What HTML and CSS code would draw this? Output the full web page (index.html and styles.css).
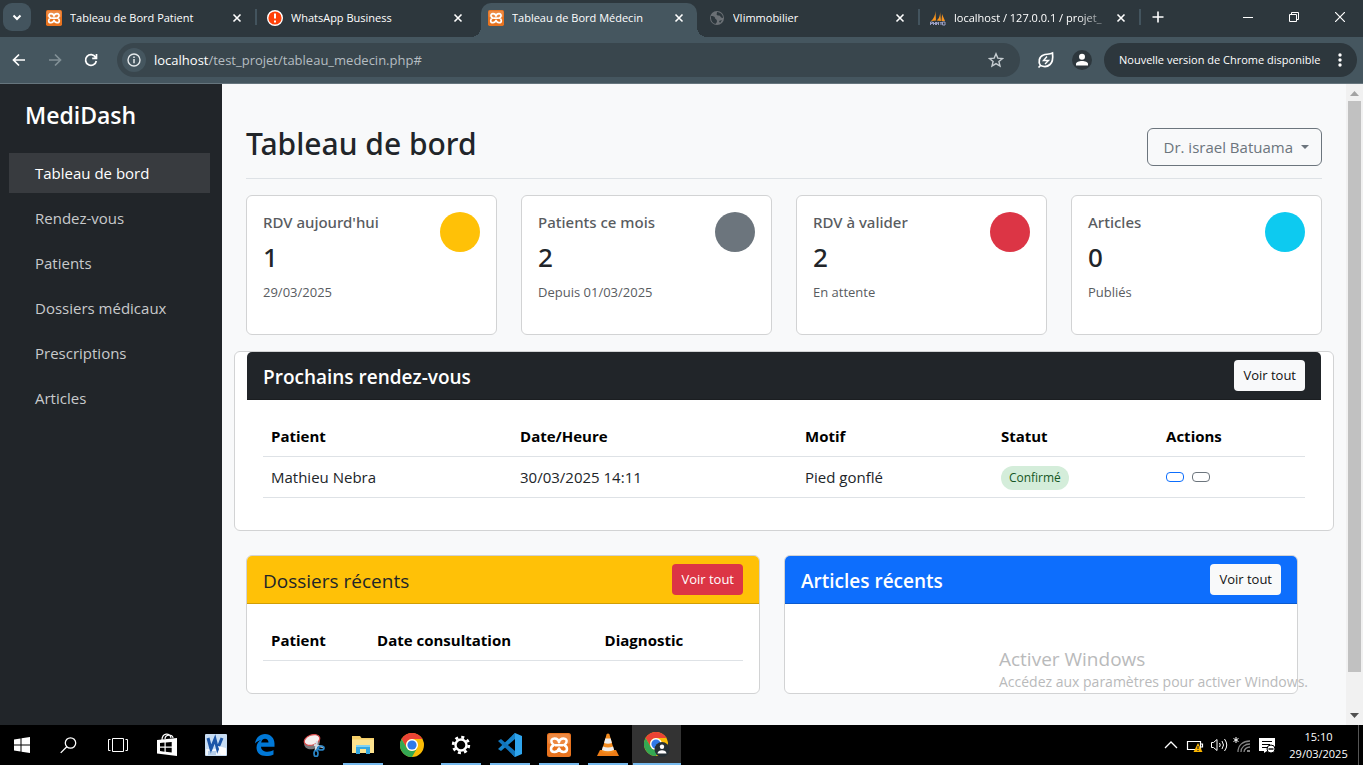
FILE: index.html
```html
<!DOCTYPE html>
<html lang="fr">
<head>
<meta charset="utf-8">
<title>Tableau de Bord Médecin</title>
<link rel="stylesheet" href="styles.css">
</head>
<body>
<svg class="defs" width="0" height="0" aria-hidden="true">
  <symbol id="close" viewBox="0 0 10 10"><path d="M1.5 1.5l7 7M8.500 1.500l-7 7" stroke="currentColor" stroke-width="1.6"/></symbol>
  <symbol id="xampp" viewBox="0 0 24 24">
    <rect width="24" height="24" rx="2.500" fill="#e8731f"/><rect x="1" y="1" width="22" height="10" rx="2" fill="#f4a46c" opacity=".45"/>
    <path d="M12 9.200C11.500 6.500 9.500 5.500 7.500 5.500 5 5.500 4 7.200 4.500 9c.3 1.500 1.200 2.300 2.500 3-2 .8-3 2.300-3 4 0 2 1.500 3 3.500 3 2.200 0 3.700-1.200 4.500-3.500.8 2.300 2.300 3.500 4.500 3.500 2 0 3.500-1 3.500-3 0-1.700-1-3.200-3-4 1.300-.7 2.200-1.500 2.500-3 .5-1.800-.5-3.500-3-3.500-2 0-4 1-4.500 3.700zM8 12.200h8" fill="none" stroke="#fff" stroke-width="2.500" stroke-linejoin="round"/>
  </symbol>
  <symbol id="chrome" viewBox="0 0 24 24">
    <circle cx="12" cy="12" r="12" fill="#fbbc05"/>
    <path d="M1.600 6A12 12 0 0 1 22.400 6H12a6 6 0 0 0-5.200 9z" fill="#ea4335"/>
    <path d="M1.600 6A12 12 0 0 0 12 24l5.200-9A6 6 0 0 1 6.800 15z" fill="#34a853"/>
    <circle cx="12" cy="12" r="6" fill="#fff"/><circle cx="12" cy="12" r="4.600" fill="#3079e8"/>
  </symbol>
</svg>
<div class="window">
  <header class="tabstrip">
    <button class="tab-search" aria-label="Rechercher dans les onglets"><svg width="12" height="12" viewBox="0 0 12 12"><path d="M2.500 4.500L6 8l3.500-3.500" fill="none" stroke="#fff" stroke-width="2"/></svg></button>
    <div class="tabs">
      <div class="tab"><svg class="favicon"><use href="#xampp"/></svg><span class="tab-title">Tableau de Bord Patient</span><button class="tab-close" aria-label="Fermer"><svg><use href="#close"/></svg></button></div>
      <div class="tab no-sep"><svg class="favicon" viewBox="0 0 16 16"><circle cx="8" cy="8" r="7.300" fill="#ff4109" stroke="#fff" stroke-width="1.400"/><path d="M8 3.500v5M8 10.500v2" stroke="#fff" stroke-width="2"/></svg><span class="tab-title">WhatsApp Business</span><button class="tab-close" aria-label="Fermer"><svg><use href="#close"/></svg></button></div>
      <div class="tab active no-sep"><svg class="favicon"><use href="#xampp"/></svg><span class="tab-title">Tableau de Bord Médecin</span><button class="tab-close" aria-label="Fermer"><svg><use href="#close"/></svg></button></div>
      <div class="tab"><svg class="favicon" viewBox="0 0 16 16"><circle cx="8" cy="8" r="7" fill="#6b7075"/><path d="M2 6c2 0 4 .5 4 2s2 1 2 3-1.500 2-1.500 3C4 13.500 2 11 2 8zM8 2c0 2-1 2 0 3s2 0 3 1 1 2 3 2c0-3-2-5.500-6-6zM10 11l3-1-2 3z" fill="#2d373d"/></svg><span class="tab-title">VIimmobilier</span><button class="tab-close" aria-label="Fermer"><svg><use href="#close"/></svg></button></div>
      <div class="tab"><svg class="favicon" viewBox="0 0 16 16"><path d="M5.500 1C5.500 5 3.500 9 1 11l5-.5zM10 1c.5 4-1 8-3.500 9.500l4.500.5zM12 4c0 3-.5 5-.5 7h3.500z" fill="#f7931e"/><path d="M.5 15v-3h2v1.500h-2m3 1.500v-3m0 1.500h2m0-1.500v3m1 0v-3l1 1.500 1-1.500v3m1.500-3l1 1.500 1-1.500m-1 1.500V15m1.500 0v-3h2.500V15h-2.500" fill="none" stroke="#9b9fc4"/></svg><span class="tab-title fade">localhost / 127.0.0.1 / projet_</span><button class="tab-close" aria-label="Fermer"><svg><use href="#close"/></svg></button></div>
      <button class="new-tab" aria-label="Nouvel onglet"><svg width="12" height="12" viewBox="0 0 12 12"><path d="M6 .500v11M.500 6h11" stroke="#fff" stroke-width="1.600"/></svg></button>
    </div>
    <div class="controls">
      <button aria-label="Réduire"><svg width="10" height="10"><path d="M0 5.500h10" stroke="#fff"/></svg></button>
      <button aria-label="Restaurer"><svg width="10" height="10" fill="none" stroke="#fff"><path d="M.5 2.500h7v7h-7zM2.500 2.500v-2h7v7h-2"/></svg></button>
      <button aria-label="Fermer la fenêtre"><svg width="10" height="10"><path d="M0 0l10 10M10 0L0 10" stroke="#fff" stroke-width="1.200"/></svg></button>
    </div>
  </header>
  <nav class="toolbar" aria-label="Navigation">
    <div class="nav-buttons">
      <button aria-label="Précédent"><svg width="14" height="14" viewBox="0 0 14 14" fill="none" stroke="#fff" stroke-width="1.700"><path d="M13 7H2M7 1.500L1.500 7 7 12.500"/></svg></button>
      <button aria-label="Suivant"><svg width="14" height="14" viewBox="0 0 14 14" fill="none" stroke="#829097" stroke-width="1.700"><path d="M1 7h11M7 1.500L12.500 7 7 12.500"/></svg></button>
      <button aria-label="Actualiser"><svg width="14" height="14" viewBox="0 0 14 14" fill="none" stroke="#fff" stroke-width="1.700"><path d="M12.300 8A5.400 5.400 0 1 1 11.600 4.200M12.500 1v4.300H8.200"/></svg></button>
    </div>
    <div class="omnibox">
      <button class="site-info" aria-label="Informations sur le site"><svg width="14" height="14" viewBox="0 0 14 14"><circle cx="7" cy="7" r="6" fill="none" stroke="#e6eaec" stroke-width="1.400"/><path d="M7 6v4.300M7 3.500v1.500" stroke="#e6eaec" stroke-width="1.500"/></svg></button>
      <span class="url"><b>localhost</b>/test_projet/tableau_medecin.php#</span>
      <button class="star" aria-label="Favori"><svg width="16" height="16" viewBox="0 0 16 16"><path d="M8 1.800l1.800 4.300 4.700.4-3.600 3 1.100 4.600L8 11.600l-4 2.500 1.100-4.600-3.600-3 4.700-.4z" fill="none" stroke="#c6cdd1" stroke-width="1.400"/></svg></button>
    </div>
    <button class="tool" aria-label="Économie d'énergie"><svg width="18" height="18" viewBox="0 0 18 18" fill="none" stroke="#fff" stroke-width="1.700"><path d="M3.500 14.500C1 11 2 5.500 6.500 4 9 3 12.500 3.500 15.500 2c.6 5 .4 9-2.500 11.500-2.500 2.300-6 2.500-9.500 1zM1.500 16.500l2-2"/><path d="M10 5.500L6.500 9.500h5L8 13" stroke-width="1.400"/></svg></button>
    <button class="tool profile" aria-label="Profil"><svg width="14" height="14" viewBox="0 0 14 14" fill="#fff"><circle cx="7" cy="3.800" r="3"/><path d="M1 12.500v-1.500C1 9 4 8 7 8s6 1 6 3v1.500z"/></svg></button>
    <button class="update">Nouvelle version de Chrome disponible <svg width="4" height="16" fill="#fff"><circle cx="2" cy="3" r="1.700"/><circle cx="2" cy="8" r="1.700"/><circle cx="2" cy="13" r="1.700"/></svg></button>
  </nav>

  <div class="page">
    <aside class="sidebar">
      <div class="brand">MediDash</div>
      <nav class="menu">
        <a class="current" href="#">Tableau de bord</a>
        <a href="#">Rendez-vous</a>
        <a href="#">Patients</a>
        <a href="#">Dossiers médicaux</a>
        <a href="#">Prescriptions</a>
        <a href="#">Articles</a>
      </nav>
    </aside>
    <main class="content">
      <div class="page-head">
        <h1>Tableau de bord</h1>
        <button class="user">Dr. israel Batuama <span class="caret"></span></button>
      </div>
      <section class="stats">
        <article class="card stat"><div><h2>RDV aujourd'hui</h2><p class="value">1</p><p class="note">29/03/2025</p></div><span class="dot yellow"></span></article>
        <article class="card stat"><div><h2>Patients ce mois</h2><p class="value">2</p><p class="note">Depuis 01/03/2025</p></div><span class="dot gray"></span></article>
        <article class="card stat"><div><h2>RDV à valider</h2><p class="value">2</p><p class="note">En attente</p></div><span class="dot red"></span></article>
        <article class="card stat"><div><h2>Articles</h2><p class="value">0</p><p class="note">Publiés</p></div><span class="dot cyan"></span></article>
      </section>
      <section class="card wide">
        <div class="card-head dark"><h2>Prochains rendez-vous</h2><a class="btn light" href="#">Voir tout</a></div>
        <div class="card-body">
          <table class="appointments">
            <colgroup><col class="c-patient"><col class="c-date"><col class="c-motif"><col class="c-statut"><col></colgroup>
            <thead><tr><th>Patient</th><th>Date/Heure</th><th>Motif</th><th>Statut</th><th>Actions</th></tr></thead>
            <tbody><tr><td>Mathieu Nebra</td><td>30/03/2025 14:11</td><td>Pied gonflé</td><td><span class="badge">Confirmé</span></td><td><div class="actions"><button class="mini blue" aria-label="Voir"></button><button class="mini" aria-label="Modifier"></button></div></td></tr></tbody>
          </table>
        </div>
      </section>
      <section class="recent">
        <article class="card">
          <div class="card-head warning"><h2>Dossiers récents</h2><a class="btn danger" href="#">Voir tout</a></div>
          <div class="card-body">
            <table class="files">
              <colgroup><col class="c-name"><col class="c-consult"><col></colgroup>
              <thead><tr><th>Patient</th><th>Date consultation</th><th>Diagnostic</th></tr></thead>
            </table>
          </div>
        </article>
        <article class="card">
          <div class="card-head primary"><h2>Articles récents</h2><a class="btn light" href="#">Voir tout</a></div>
        </article>
      </section>
    </main>
    <div class="scrollbar">
      <svg width="9" height="5"><path d="M0 5l4.500-5L9 5z" fill="#a3a3a3"/></svg>
      <div class="thumb"></div>
      <svg width="9" height="5"><path d="M0 0l4.500 5L9 0z" fill="#505050"/></svg>
    </div>
    <div class="watermark"><p class="wm-title">Activer Windows</p><p>Accédez aux paramètres pour activer Windows.</p></div>
  </div>

  <footer class="taskbar">
    <div class="apps">
      <button class="first" aria-label="Démarrer"><svg width="16" height="16" fill="#fff"><path d="M0 2.500l6.500-1v6H0zM7.500 1.300L16 0v7.500H7.500zM0 8.500h6.500v6L0 13.600zM7.500 8.500H16V16l-8.500-1.300z"/></svg></button>
      <button aria-label="Rechercher"><svg width="17" height="17" fill="none" stroke="#fff" stroke-width="1.300"><circle cx="10.500" cy="6" r="5.200"/><path d="M6.800 9.700L.7 15.900"/></svg></button>
      <button aria-label="Vue des tâches"><svg width="20" height="16" fill="none" stroke="#fff"><path d="M4.500 1.500h11v13h-11zM2.500 2.500h-2v11h2M17.500 2.500h2v11h-2"/></svg></button>
      <button aria-label="Store"><svg width="22" height="24" viewBox="0 0 22 24"><path d="M1 7l20-2v18L1 20.500z" fill="#fff"/><path d="M6 7c0-7 8-8 9-2M9 6c0-5 8-5 8-1" fill="none" stroke="#fff" stroke-width="1.200"/><path d="M4 10l4.500-.4v4H4zM9.700 9.500l6-.6v4.700h-6zM4 14.700h4.500v4L4 18zM9.700 14.700h6v4.800l-6-.8z" fill="#000"/></svg></button>
      <button aria-label="Word"><svg width="22" height="22" viewBox="0 0 22 22"><rect width="22" height="22" rx="1" fill="#c8ddf3"/><rect x="1" y="15" width="20" height="6" fill="#f1f6fc"/><path d="M3 4l3 11L10 5l2.500 10L17 4" fill="none" stroke="#1c56a8" stroke-width="3"/><path d="M13 12l8 2v7h-5z" fill="#fff"/><path d="M3 18h8M3 20h8" stroke="#7da7d8"/></svg></button>
      <button aria-label="Edge"><svg width="21" height="22" viewBox="0 0 21 22"><path d="M1 9.500C2 3.500 6 0 11 0c6 0 9.500 4.500 9.500 9.500v3.200H7c.2 3.500 3 5 6.500 5 2.200 0 4.300-.7 6-1.700v4.400c-2 1-4.500 1.600-7.300 1.600C6 22 2.500 18.500 2.500 13.500c0-3.500 2-6.500 5-7.700C5 6.500 2.500 7.800 1 9.500zM7.200 8.600h7.300C14.500 6.200 13 4.800 11 4.800S7.500 6.200 7.200 8.600z" fill="#0078d7"/></svg></button>
      <button aria-label="Outil Capture"><svg width="22" height="23" viewBox="0 0 22 23"><ellipse cx="9" cy="9" rx="8" ry="6" fill="#77777b" transform="rotate(-20 9 9)"/><ellipse cx="9" cy="6" rx="8" ry="5" fill="#f5eeee" stroke="#d94b4b" stroke-width="1.200" transform="rotate(-20 9 6)"/><path d="M14 7l-1.500 10M20 13l-9-2" stroke="#d3dbe3" stroke-width="2"/><g fill="none" stroke="#2985c7" stroke-width="1.700"><ellipse cx="18" cy="14" rx="3" ry="2"/><ellipse cx="13" cy="19.500" rx="2" ry="3"/><path d="M13 17l3-4"/></g></svg></button>
      <button class="running" aria-label="Explorateur"><svg width="22" height="20" viewBox="0 0 22 20"><path d="M0 1h8l1.500 2H22v15H0z" fill="#f5ce68"/><path d="M0 4.500h22V18H0z" fill="#fde38f"/><path d="M4 19v-9h14v9h-4v-5H8v5z" fill="#36a8e0"/><path d="M4 10h14v2H4z" fill="#7fd2f4"/></svg></button>
      <button aria-label="Chrome"><svg width="24" height="24"><use href="#chrome"/></svg></button>
      <button class="running" aria-label="Paramètres"><svg width="20" height="20" viewBox="0 0 20 20" fill="none" stroke="#fff"><circle cx="10" cy="10" r="5.500" stroke-width="2.400"/><circle cx="10" cy="10" r="7.800" stroke-width="2.800" stroke-dasharray="3 3.126"/></svg></button>
      <button class="running" aria-label="Visual Studio Code"><svg width="24" height="24" viewBox="0 0 24 24"><path d="M17 0l7 3v18l-7 3-3-3 3-3V6l-3-3z" fill="#2fa5ee"/><path d="M17 0v6L3 18 0 16z" fill="#1683ca"/><path d="M17 24v-6L3 6 0 8z" fill="#1174bb"/></svg></button>
      <button class="running" aria-label="XAMPP"><svg width="24" height="24"><use href="#xampp"/></svg></button>
      <button class="running" aria-label="VLC"><svg width="22" height="24" viewBox="0 0 22 24"><path d="M3 17h16l3 6H0z" fill="#ed7c16"/><path d="M9.500 1.500q1.500-2 3 0L17.500 19q-6.500 3-13 0z" fill="#f28a1d"/><path d="M8.300 5.500h5.400l1.200 4.500q-3.900 1.500-7.800 0zM5.900 13.500q5.100 2 10.200 0l1 3.500q-6.100 2.500-12.200 0z" fill="#eee"/></svg></button>
      <button class="running focused" aria-label="Chrome, profil"><svg width="26" height="26" viewBox="0 0 26 26"><svg width="24" height="24"><use href="#chrome"/></svg><circle cx="18" cy="17.500" r="7.500" fill="#252f35"/><circle cx="18" cy="14.700" r="2.200" fill="#fff"/><path d="M13.500 21.500c0-4.500 9-4.500 9 0z" fill="#fff"/></svg></button>
    </div>
    <div class="tray">
      <svg width="24" height="16" fill="none" stroke="#fff" stroke-width="1.300"><path d="M6 11l6-6 6 6"/></svg>
      <svg width="24" height="16"><path d="M4.500 4.500h13v8h-13zM18 7h1.500v3H18" fill="none" stroke="#fff" stroke-width="1.200"/><path d="M15 6l4.500 9h-9z" fill="#fbb500"/><path d="M15 9v3M15 13v1" stroke="#222" stroke-width="1.200"/></svg>
      <svg width="24" height="16" fill="none" stroke="#fff"><path d="M4.500 5.500h2l3.500-3v11l-3.500-3h-2zM12.500 6q1.500 2 0 4M15 4q3 4 0 8M17.500 2q4.500 6 0 12"/></svg>
      <svg width="24" height="16" fill="none"><path d="M5 0v6M2.500 1.500l5 3M7.500 1.500l-5 3" stroke="#fff"/><path d="M7 15C7 8 12 4 19 4M10 15c0-5 4-8 9-8M13 15c0-3 3-5 6-5" stroke="#858585" stroke-width="1.300"/><path d="M16 13h3v2h-3z" fill="#858585"/></svg>
      <svg width="24" height="18"><path d="M4 2h16v13h-8l-3 2v-2H4z" fill="#fff"/><path d="M7 5.500h10M7 8.500h8M7 11.500h5" stroke="#000"/><circle cx="16" cy="13" r="4" fill="#fff" stroke="#000"/><path d="M13.500 13h5" stroke="#000" stroke-width="1.400"/></svg>
      <div class="clock"><span>15:10</span><span>29/03/2025</span></div>
    </div>
  </footer>
</div>
</body>
</html>
```
FILE: styles.css
```css
* { box-sizing: border-box; }
body { margin: 0; font: 15px/24px "Open Sans", "Noto Sans", sans-serif; color: #212529; }
h1, h2, p { margin: 0; }
button { font: inherit; color: inherit; background: none; border: 0; padding: 0; }
a { color: inherit; text-decoration: none; }
.defs { position: absolute; }
.window { display: flex; flex-direction: column; height: 100vh; overflow: hidden; }

/* Browser frame */
.tabstrip { display: flex; height: 37px; flex: none; background: #2d373d; color: #fff; font-size: 11px; }
.tab-search { width: 28px; height: 28px; margin: 3px 7px 0 3px; flex: none; border-radius: 9px; background: #43545e; display: grid; place-items: center; }
.tabs { display: flex; flex: 1; min-width: 0; }
.tab { position: relative; display: flex; align-items: center; gap: 8px; flex: 0 1 221px; min-width: 0; height: 34px; margin-top: 3px; padding: 0 17px 5px 8px; }
.tab::after { content: ""; position: absolute; right: 2px; top: 6px; width: 2px; height: 16px; background: #43545e; }
.tab.no-sep::after { display: none; }
.tab.active { z-index: 1; }
.tab.active::before { content: ""; position: absolute; z-index: -1; inset: 0 4px 0 1px; border-radius: 10px 10px 0 0; background: #45565f; }
.tab.active::after { display: block; z-index: -2; top: auto; bottom: 0; left: -9px; right: -6px; width: auto; height: 10px; background: radial-gradient(circle at 0 0, transparent 10px, #45565f 10px) left / 10px 10px no-repeat, radial-gradient(circle at 100% 0, transparent 10px, #45565f 10px) right / 10px 10px no-repeat; }
.favicon { width: 16px; height: 16px; flex: none; }
.tab-title { flex: 1; min-width: 0; overflow: hidden; white-space: nowrap; }
.fade { mask-image: linear-gradient(90deg, #000 80%, rgba(0, 0, 0, .2)); }
.tab-close { width: 10px; height: 24px; flex: none; display: grid; place-items: center; }
.tab-close svg { width: 10px; height: 10px; }
.new-tab { width: 28px; height: 34px; flex: none; margin-left: 1px; display: grid; place-items: center; }
.controls { display: flex; }
.controls button { width: 46px; height: 34px; display: grid; place-items: center; }
.toolbar { display: flex; align-items: center; height: 47px; flex: none; padding: 0 6px 0 1px; background: #45565f; border-bottom: 1px solid #66757d; color: #fff; }
.nav-buttons { display: flex; width: 116px; flex: none; }
.nav-buttons button { width: 36px; height: 34px; display: grid; place-items: center; }
.omnibox { display: flex; align-items: center; flex: 1; min-width: 0; height: 34px; padding: 0 16px 0 5px; border-radius: 17px; background: #39464d; font-size: 13px; }
.site-info { width: 24px; height: 24px; margin-right: 8px; border-radius: 50%; background: #45565f; display: grid; place-items: center; }
.url { flex: 1; color: #b5bdc1; white-space: nowrap; overflow: hidden; }
.url b { color: #fff; font-weight: 400; }
.star { display: grid; place-items: center; }
.tool { width: 20px; height: 20px; margin-left: 16px; flex: none; display: grid; place-items: center; }
.profile { border-radius: 50%; background: #2d373d; }
.update { display: flex; align-items: center; justify-content: space-between; flex: none; width: 253px; height: 34px; margin-left: 12px; padding: 0 15px; border-radius: 17px; background: #2d373d; font-size: 11px; white-space: nowrap; }

/* Dashboard */
.page { position: relative; display: flex; flex: 1; min-height: 0; background: #f8f9fa; }
.sidebar { width: 222px; flex: none; padding: 15px 12px 0 9px; background: #212529; color: #c8cacc; }
.brand { padding: 0 16px; margin-bottom: 22px; color: #fff; font-size: 23px; line-height: 32px; font-weight: 600; }
.menu { display: grid; gap: 5px; }
.menu a { padding: 8px 26px; }
.menu .current { background: #383b3f; color: #fff; }
.content { flex: 1; min-width: 0; overflow: hidden; padding: 44px 24px 0; }
.page-head { display: flex; align-items: flex-start; justify-content: space-between; padding-bottom: 12px; margin-bottom: 16px; border-bottom: 1px solid #dee2e6; }
h1 { font-family: "Noto Sans", sans-serif; font-size: 30px; line-height: 32px; font-weight: 500; }
.user { display: flex; align-items: center; gap: 8px; height: 38px; padding: 0 12px 0 16px; border: 1px solid #6c757d; border-radius: 6px; color: #6c757d; }
.caret { border: 4px solid transparent; border-top-color: #6c757d; border-bottom: 0; }
.card { background: #fff; border: 1px solid #d2d3d4; border-radius: 6px; }
.stats { display: grid; grid-template-columns: repeat(4, 1fr); gap: 24px; margin-bottom: 16px; }
.stat { display: flex; justify-content: space-between; padding: 16px 16px 31px; }
.stat h2 { font-family: "Noto Sans", sans-serif; font-size: 15px; line-height: 20px; font-weight: 500; color: #595c5f; }
.value { margin: 8px 0; font-family: "Noto Sans", sans-serif; font-size: 26px; line-height: 34px; font-weight: 500; }
.note { font-size: 13px; line-height: 21px; color: #595c5f; }
.dot { width: 40px; height: 40px; border-radius: 50%; }
.yellow { background: #ffc107; }
.gray { background: #6c757d; }
.red { background: #dc3545; }
.cyan { background: #0dcaf0; }
.wide { margin: 0 -12px 24px; padding: 0 12px; }
.card-head { display: flex; align-items: center; justify-content: space-between; height: 48px; padding: 0 16px; border-bottom: 1px solid rgba(0, 0, 0, .18); border-radius: 5px 5px 0 0; }
.card-head h2 { padding-top: 2px; font-size: 19px; line-height: 24px; font-weight: 500; }
.dark { background: #212529; color: #fff; }
.card-head.dark h2, .card-head.primary h2 { font-weight: 600; }
.warning { background: #ffc107; }
.primary { background: #0d6efd; color: #fff; }
.btn { padding: 5px 9px; border-radius: 4px; font-size: 13px; line-height: 21px; }
.light { background: #f8f9fa; color: #111; }
.danger { background: #dc3545; color: #fff; }
.card-body { padding: 16px 16px 32px; }
table { width: 100%; table-layout: fixed; border-collapse: separate; border-spacing: 0; }
th, td { height: 41px; padding: 0 8px; text-align: left; border-bottom: 1px solid #dee2e6; }
th { color: #000; font-weight: 700; }
.c-patient { width: 23.9%; }
.c-date { width: 27.35%; }
.c-motif { width: 18.8%; }
.c-statut { width: 15.85%; }
.c-name { width: 22.1%; }
.c-consult { width: 47.4%; }
.badge { display: inline-block; padding: 0 8px; border-radius: 12px; background: #d4edda; color: #155724; font-size: 12px; vertical-align: middle; }
.actions { display: flex; gap: 8px; }
.mini { width: 18px; height: 10px; border: 1px solid #6c757d; border-radius: 4px; }
.blue { border-color: #0d6efd; }
.recent { display: grid; grid-template-columns: 1fr 1fr; gap: 24px; padding-right: 24px; }
.scrollbar { display: flex; flex-direction: column; align-items: center; justify-content: space-between; width: 17px; flex: none; padding: 7px 2px; background: #f1f1f1; }
.thumb { width: 13px; flex: 1; margin: 5px 0 41px; background: #c1c1c1; }
.watermark { position: absolute; right: 55px; bottom: 31px; color: #b9babb; font-size: 14px; line-height: 24px; pointer-events: none; }
.wm-title { font-size: 19px; line-height: 22px; }

/* Taskbar */
.taskbar { display: flex; justify-content: space-between; height: 40px; flex: none; background: #000; color: #fff; }
.apps { display: flex; }
.apps button { width: 49px; height: 40px; display: grid; place-items: center; }
.apps .first { width: 44px; }
.running { background: linear-gradient(#76b9ed, #76b9ed) bottom / 40px 2px no-repeat; }
.apps .focused { background: linear-gradient(#76b9ed, #76b9ed) bottom / 48px 2px no-repeat #333; }
.tray { display: flex; align-items: center; border-right: 1px solid #555; margin-right: 4px; }
.clock { display: grid; width: 79px; text-align: center; font-size: 11px; line-height: 17px; }
```
